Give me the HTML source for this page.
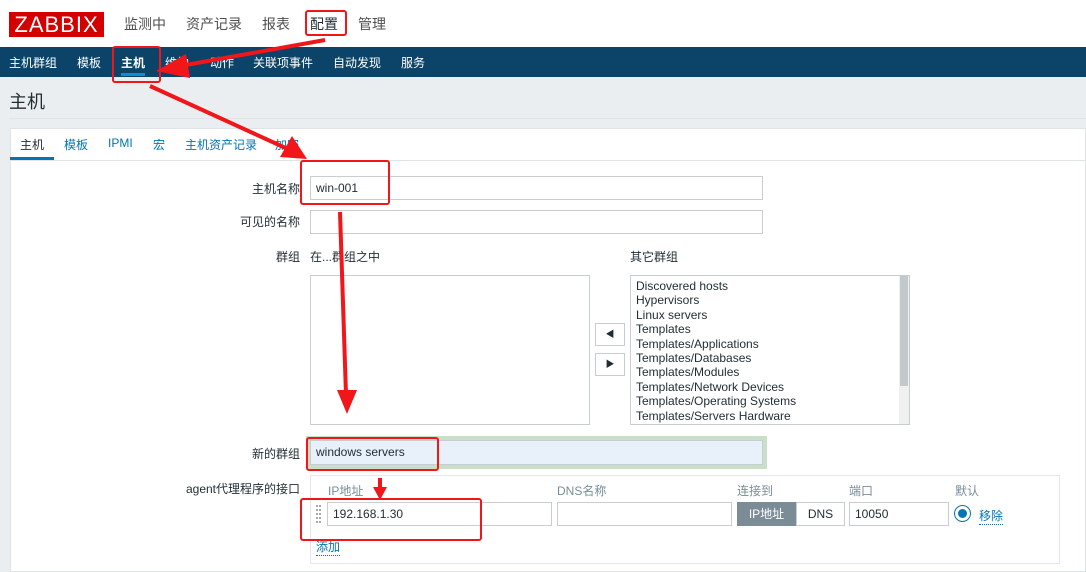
<!DOCTYPE html>
<html><head><meta charset="utf-8"><style>
*{margin:0;padding:0;box-sizing:border-box}
body{width:1086px;height:572px;overflow:hidden;background:#ebeef0;font-family:"Liberation Sans","Noto Sans CJK SC",sans-serif;font-size:12px;color:#1f2c33;position:relative}
.a{position:absolute;white-space:nowrap}
.inp{position:absolute;background:#fff;border:1px solid #c8cdd2;height:24px;padding:0 5px;line-height:22px}
.rb{position:absolute;border:2px solid #f0161a;border-radius:3px}
.lbl{position:absolute;right:786px;white-space:nowrap;text-align:right}
</style></head><body>
<div class="a" style="left:0;top:0;width:1086px;height:47px;background:#fff"></div>
<div class="a" style="left:9px;top:12px;width:95px;height:25px;background:#d40000;color:#fff;font-size:22px;line-height:25px;text-align:center;letter-spacing:1px">ZABBIX</div>
<div class="a" style="top:14px;left:124px;font-size:14px;color:#4f4f4f">监测中</div>
<div class="a" style="top:14px;left:186px;font-size:14px;color:#4f4f4f">资产记录</div>
<div class="a" style="top:14px;left:262px;font-size:14px;color:#4f4f4f">报表</div>
<div class="a" style="top:14px;left:310px;font-size:14px;color:#1f2c33">配置</div>
<div class="a" style="top:14px;left:358px;font-size:14px;color:#4f4f4f">管理</div>
<div class="a" style="left:0;top:47px;width:1086px;height:30px;background:#0b4468"></div>
<div class="a" style="top:54px;left:9px;color:#fff">主机群组</div>
<div class="a" style="top:54px;left:77px;color:#fff">模板</div>
<div class="a" style="top:54px;left:121px;color:#fff;font-weight:bold">主机</div>
<div class="a" style="left:121px;top:73px;width:24px;height:3px;background:#0a8fd6"></div>
<div class="a" style="top:54px;left:165px;color:#fff">维护</div>
<div class="a" style="top:54px;left:210px;color:#fff">动作</div>
<div class="a" style="top:54px;left:253px;color:#fff">关联项事件</div>
<div class="a" style="top:54px;left:333px;color:#fff">自动发现</div>
<div class="a" style="top:54px;left:401px;color:#fff">服务</div>
<div class="a" style="top:88px;left:9px;font-size:18px;color:#1f2c33">主机</div>
<div class="a" style="left:9px;top:118px;width:1077px;height:1px;background:#dfe4e7"></div>
<div class="a" style="left:10px;top:128px;width:1076px;height:444px;background:#fff;border:1px solid #dfe4e7"></div>
<div class="a" style="left:10px;top:160px;width:1076px;height:1px;background:#dfe4e7"></div>
<div class="a" style="top:136px;left:20px">主机</div>
<div class="a" style="left:10px;top:157px;width:44px;height:3px;background:#0275b8"></div>
<div class="a" style="top:136px;left:64px;color:#0275b8">模板</div>
<div class="a" style="top:136px;left:108px;color:#0275b8">IPMI</div>
<div class="a" style="top:136px;left:153px;color:#0275b8">宏</div>
<div class="a" style="top:136px;left:185px;color:#0275b8">主机资产记录</div>
<div class="a" style="top:136px;left:275px;color:#0275b8">加密</div>

<div class="lbl" style="top:180px">主机名称</div>
<div class="inp" style="left:310px;top:176px;width:453px">win-001</div>
<div class="lbl" style="top:213px">可见的名称</div>
<div class="inp" style="left:310px;top:210px;width:453px"></div>
<div class="lbl" style="top:248px">群组</div>
<div class="a" style="top:248px;left:310px">在...群组之中</div>
<div class="a" style="top:248px;left:630px">其它群组</div>
<div class="a" style="left:310px;top:275px;width:280px;height:150px;border:1px solid #c8cdd2;background:#fff"></div>
<div class="a" style="left:630px;top:275px;width:280px;height:150px;border:1px solid #c8cdd2;background:#fff;padding:3px 5px;line-height:14.4px">Discovered hosts<br>Hypervisors<br>Linux servers<br>Templates<br>Templates/Applications<br>Templates/Databases<br>Templates/Modules<br>Templates/Network Devices<br>Templates/Operating Systems<br>Templates/Servers Hardware</div>
<div class="a" style="left:899px;top:276px;width:10px;height:148px;background:#f0f0f0"></div>
<div class="a" style="left:900px;top:276px;width:8px;height:110px;background:#c2c8cc"></div>
<div class="a" style="left:595px;top:323px;width:30px;height:23px;border:1px solid #c8cdd2;background:#fff;text-align:center;line-height:21px;font-size:9px">◀</div>
<div class="a" style="left:595px;top:353px;width:30px;height:23px;border:1px solid #c8cdd2;background:#fff;text-align:center;line-height:21px;font-size:9px">▶</div>

<div class="lbl" style="top:445px">新的群组</div>
<div class="a" style="left:306px;top:436px;width:461px;height:33px;background:#c8e0c8"></div>
<div class="inp" style="left:310px;top:440px;width:453px;height:25px;background:#e8f0fa">windows servers</div>
<div class="lbl" style="top:480px">agent代理程序的接口</div>
<div class="a" style="left:310px;top:475px;width:750px;height:89px;border:1px solid #e4e7e9"></div>
<div class="a" style="top:482px;left:328px;color:#768d99">IP地址</div>
<div class="a" style="top:482px;left:557px;color:#768d99">DNS名称</div>
<div class="a" style="top:482px;left:737px;color:#768d99">连接到</div>
<div class="a" style="top:482px;left:849px;color:#768d99">端口</div>
<div class="a" style="top:482px;left:955px;color:#768d99">默认</div>
<div class="a" style="left:316px;top:505px;width:5px;height:18px;border-left:2px dotted #aaa;border-right:2px dotted #aaa"></div>
<div class="inp" style="left:327px;top:502px;width:225px">192.168.1.30</div>
<div class="inp" style="left:557px;top:502px;width:175px"></div>
<div class="a" style="left:737px;top:502px;width:59px;height:24px;background:#7b8c96;color:#fff;text-align:center;line-height:24px">IP地址</div>
<div class="a" style="left:796px;top:502px;width:49px;height:24px;border:1px solid #c8cdd2;text-align:center;line-height:22px">DNS</div>
<div class="inp" style="left:849px;top:502px;width:100px">10050</div>
<div class="a" style="left:954px;top:505px;width:17px;height:17px;border-radius:50%;border:1px solid #0275b8"></div>
<div class="a" style="left:958px;top:509px;width:9px;height:9px;border-radius:50%;background:#0275b8"></div>
<div class="a" style="top:507px;left:979px;color:#0275b8;border-bottom:1px dotted #0275b8">移除</div>
<div class="a" style="top:538px;left:316px;color:#0275b8;border-bottom:1px dotted #0275b8">添加</div>

<div class="rb" style="left:305px;top:10px;width:42px;height:26px"></div>
<div class="rb" style="left:112px;top:46px;width:49px;height:37px"></div>
<div class="rb" style="left:300px;top:160px;width:90px;height:45px"></div>
<div class="rb" style="left:306px;top:437px;width:133px;height:34px"></div>
<div class="rb" style="left:300px;top:498px;width:182px;height:43px"></div>
<svg class="a" style="left:0;top:0" width="1086" height="572">
<g stroke="#f0161a" stroke-width="4" fill="#f0161a">
<line x1="325" y1="40" x2="180" y2="66"/>
<polygon points="156,71 186,54 190,78" stroke="none"/>
<line x1="150" y1="86" x2="290" y2="150"/>
<polygon points="307,159 280,157 292,136" stroke="none"/>
<line x1="340" y1="212" x2="346" y2="395"/>
<polygon points="347,414 337,390 357,390" stroke="none"/>
<line x1="380" y1="478" x2="380" y2="490"/>
<polygon points="380,500 373,487 387,487" stroke="none"/>
</g></svg>
</body></html>
